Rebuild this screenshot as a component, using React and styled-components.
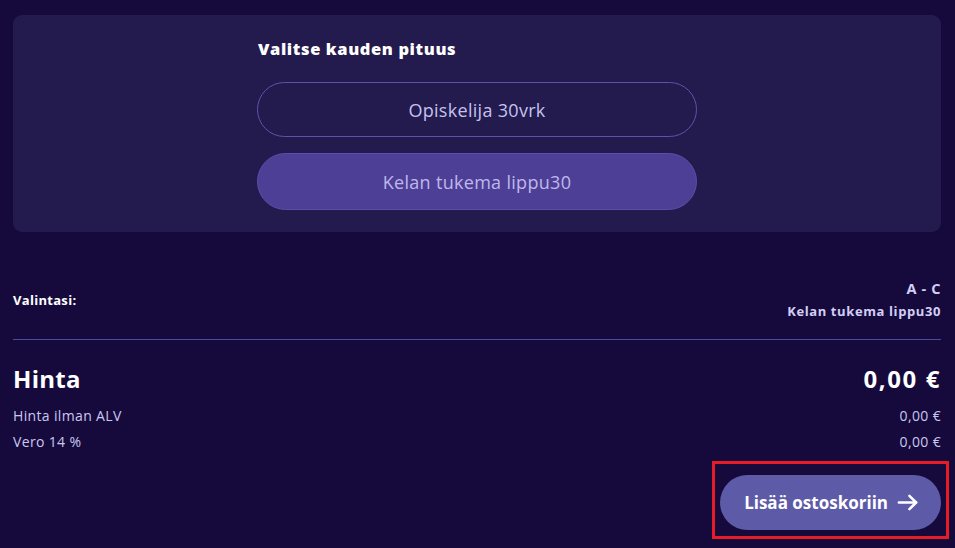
import React, { useState } from "react";
import styled, { createGlobalStyle } from "styled-components";

const GlobalStyle = createGlobalStyle`
  html, body {
    margin: 0;
    padding: 0;
    background: #160a3c;
  }
  body {
    font-family: "Open Sans", "Noto Sans", sans-serif;
    color: #ffffff;
  }
`;

const Page = styled.div`
  width: 928px;
  padding: 15px 14px 0 13px;
`;

const Card = styled.div`
  background: #231a4e;
  border-radius: 9px;
  height: 217px;
  box-sizing: border-box;
  padding-top: 25px;
  display: flex;
  justify-content: center;
`;

const Column = styled.div`
  width: 440px;
  display: flex;
  flex-direction: column;
`;

const Title = styled.h3`
  margin: 0 0 24px 1px;
  font-size: 16.5px;
  font-weight: 800;
  line-height: 18px;
  letter-spacing: 0.6px;
  color: #ffffff;
`;

const Option = styled.button`
  height: ${(p) => (p.$active ? "57px" : "55px")};
  margin-bottom: 16px;
  border-radius: 30px;
  border: 1px solid ${(p) => (p.$active ? "#5a4fa8" : "#5a54ac")};
  background: ${(p) => (p.$active ? "#4e3f96" : "transparent")};
  color: ${(p) => (p.$active ? "#beb8ec" : "#c5c2ee")};
  font-family: "Open Sans", "Noto Sans", sans-serif;
  font-size: 18px;
  letter-spacing: 0.3px;
  cursor: pointer;
`;

const Summary = styled.div`
  display: flex;
  justify-content: space-between;
  align-items: center;
  padding: 46px 0 17px;
  border-bottom: 1px solid #4b4a9e;
`;

const Label = styled.span`
  font-size: 13px;
  font-weight: 700;
  letter-spacing: 0.3px;
  color: #ffffff;
`;

const Choice = styled.div`
  text-align: right;
  font-weight: 700;
  color: #d2cff6;
  font-size: ${(p) => p.$size || "13px"};
  letter-spacing: 0.6px;
  line-height: 22px;
`;

const PriceBlock = styled.div`
  padding-top: 15px;
`;

const Row = styled.div`
  display: flex;
  justify-content: space-between;
  align-items: baseline;
  line-height: ${(p) => p.$h || "26px"};
  height: ${(p) => p.$h || "26px"};
`;

const BigText = styled.span`
  font-size: 24px;
  font-weight: 700;
  letter-spacing: ${(p) => (p.$num ? "1.6px" : "0.3px")};
  color: #ffffff;
`;

const SmallText = styled.span`
  font-size: 14px;
  letter-spacing: 0.35px;
  color: #cac7f2;
`;

const Footer = styled.div`
  display: flex;
  justify-content: flex-end;
  margin-top: 6px;
  margin-right: -8px;
`;

const Highlight = styled.div`
  border: 3px solid #e61c24;
  padding: 11px 5px 6px 5px;
`;

const CartButton = styled.button`
  display: flex;
  align-items: center;
  gap: 8px;
  height: 55px;
  padding: 0 22px 0 24px;
  border: none;
  border-radius: 28px;
  background: #5d5aa8;
  color: #ffffff;
  font-family: "Open Sans", "Noto Sans", sans-serif;
  font-size: 17px;
  font-weight: 700;
  cursor: pointer;
`;

export default function App() {
  const [selected, setSelected] = useState(1);
  const options = ["Opiskelija 30vrk", "Kelan tukema lippu30"];

  return (
    <>
      <GlobalStyle />
      <Page>
        <Card>
          <Column>
            <Title>Valitse kauden pituus</Title>
            {options.map((o, i) => (
              <Option key={o} $active={selected === i} onClick={() => setSelected(i)}>
                {o}
              </Option>
            ))}
          </Column>
        </Card>
        <Summary>
          <Label>Valintasi:</Label>
          <div>
            <Choice $size="14.5px">A - C</Choice>
            <Choice>{options[selected]}</Choice>
          </div>
        </Summary>
        <PriceBlock>
          <Row $h="48px">
            <BigText>Hinta</BigText>
            <BigText $num>0,00 €</BigText>
          </Row>
          <Row>
            <SmallText>Hinta ilman ALV</SmallText>
            <SmallText>0,00 €</SmallText>
          </Row>
          <Row>
            <SmallText>Vero 14 %</SmallText>
            <SmallText>0,00 €</SmallText>
          </Row>
        </PriceBlock>
        <Footer>
          <Highlight>
            <CartButton>
              Lisää ostoskoriin
              <svg width="23" height="23" viewBox="0 0 24 24" fill="none" stroke="#ffffff" strokeWidth="2.6" strokeLinecap="round" strokeLinejoin="round">
                <line x1="3" y1="12" x2="21" y2="12" />
                <polyline points="14 5 21 12 14 19" />
              </svg>
            </CartButton>
          </Highlight>
        </Footer>
      </Page>
    </>
  );
}
